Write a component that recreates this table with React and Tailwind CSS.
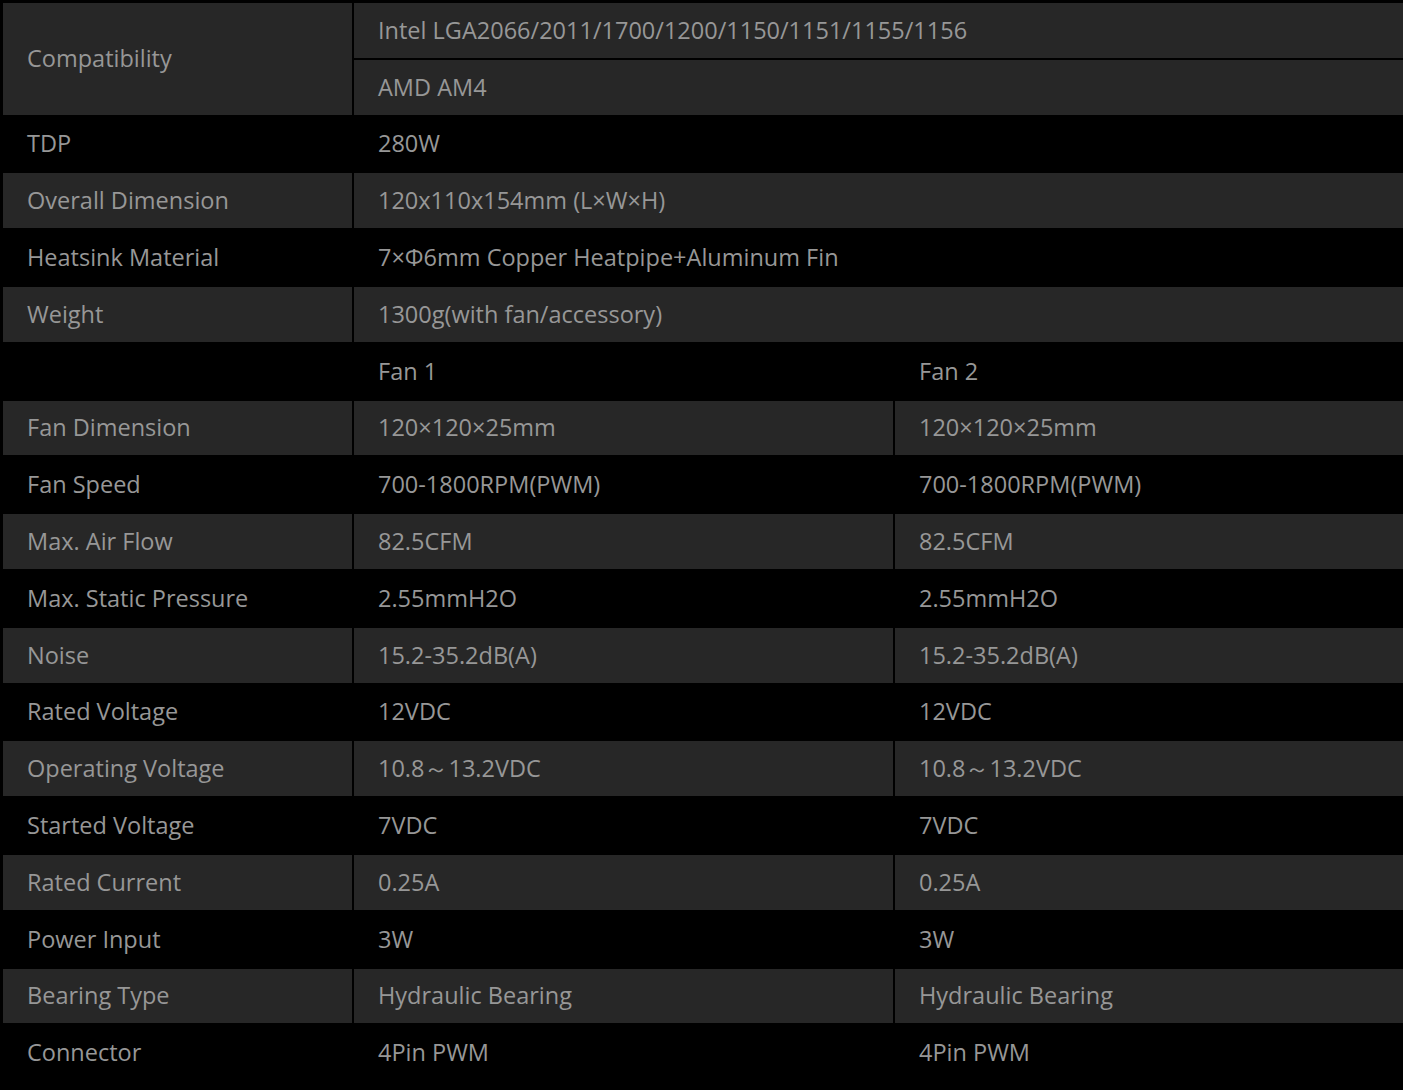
const general = [
  { label: "TDP", value: "280W" },
  { label: "Overall Dimension", value: "120x110x154mm (L×W×H)" },
  { label: "Heatsink Material", value: "7×Φ6mm Copper Heatpipe+Aluminum Fin" },
  { label: "Weight", value: "1300g(with fan/accessory)" },
];

const fanSpecs = [
  { label: "Fan Dimension", value: "120×120×25mm" },
  { label: "Fan Speed", value: "700-1800RPM(PWM)" },
  { label: "Max. Air Flow", value: "82.5CFM" },
  { label: "Max. Static Pressure", value: "2.55mmH2O" },
  { label: "Noise", value: "15.2-35.2dB(A)" },
  { label: "Rated Voltage", value: "12VDC" },
  { label: "Operating Voltage", value: "10.8～13.2VDC" },
  { label: "Started Voltage", value: "7VDC" },
  { label: "Rated Current", value: "0.25A" },
  { label: "Power Input", value: "3W" },
  { label: "Bearing Type", value: "Hydraulic Bearing" },
  { label: "Connector", value: "4Pin PWM" },
];

function Cell({ children, shaded, className = "" }) {
  return (
    <div className={`flex items-center pl-[24px] ${shaded ? "bg-[#272727]" : "bg-black"} ${className}`}>
      {children}
    </div>
  );
}

export default function App() {
  return (
    <div className="min-h-[1090px] bg-black pl-[3px] pt-[3px] font-['Open_Sans',sans-serif] text-[23.5px] text-[#979797]">
      <div className="grid grid-cols-[349px_539px_1fr] auto-rows-[54.8px] gap-[2px]">
        <Cell shaded className="row-span-2">Compatibility</Cell>
        <Cell shaded className="col-span-2">Intel LGA2066/2011/1700/1200/1150/1151/1155/1156</Cell>
        <Cell shaded className="col-span-2">AMD AM4</Cell>

        {general.map((row, i) => (
          <div key={row.label} className="contents">
            <Cell shaded={i % 2 === 1}>{row.label}</Cell>
            <Cell shaded={i % 2 === 1} className="col-span-2">{row.value}</Cell>
          </div>
        ))}

        <Cell />
        <Cell>Fan 1</Cell>
        <Cell>Fan 2</Cell>

        {fanSpecs.map((row, i) => {
          const shaded = i % 2 === 0;
          return (
            <div key={row.label} className="contents">
              <Cell shaded={shaded}>{row.label}</Cell>
              <Cell shaded={shaded}>{row.value}</Cell>
              <Cell shaded={shaded}>{row.value}</Cell>
            </div>
          );
        })}
      </div>
    </div>
  );
}
